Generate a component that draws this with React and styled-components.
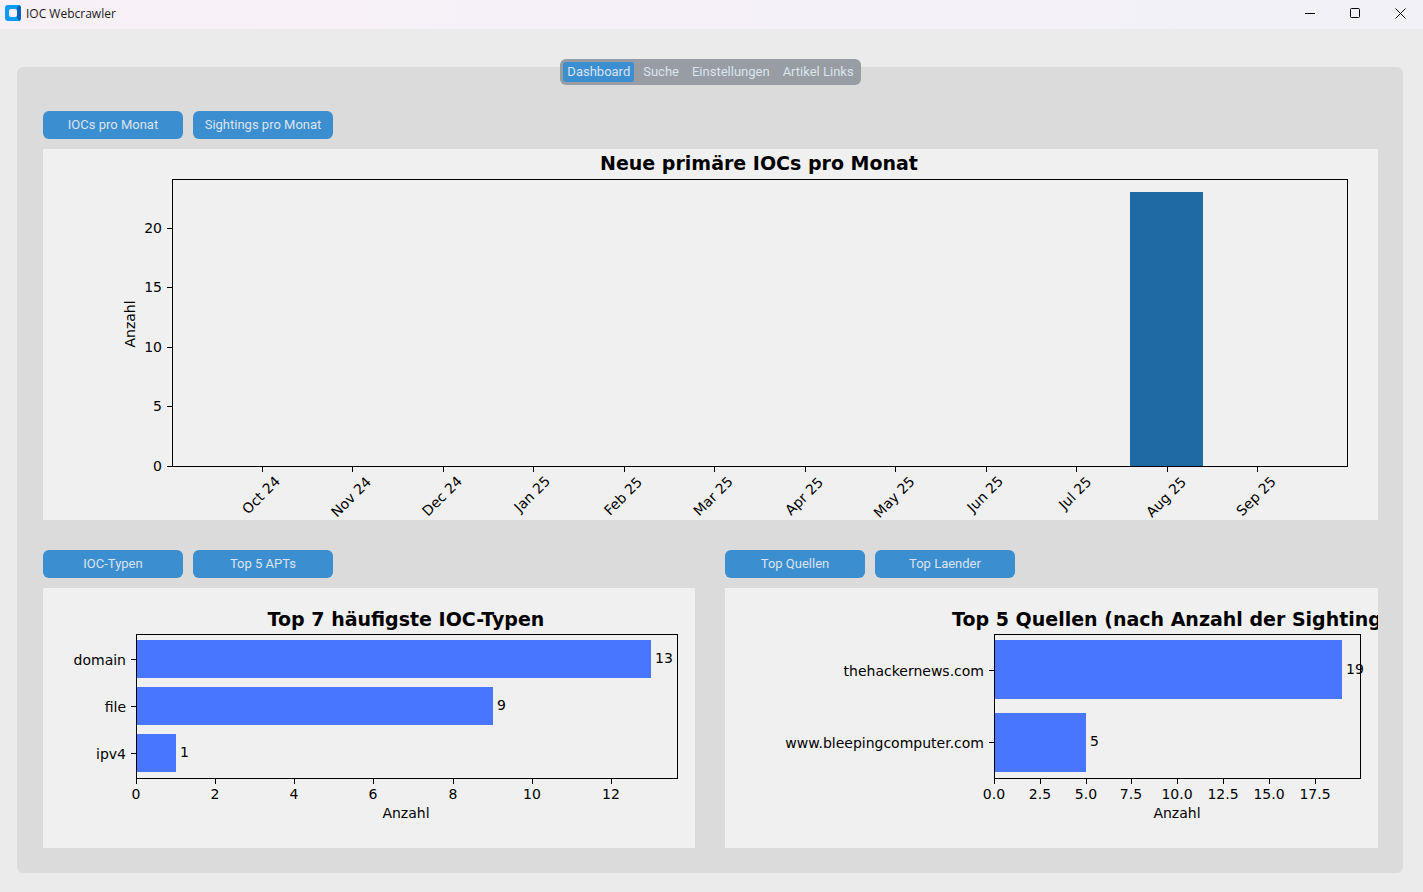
import React, { useState } from "react";
import styled, { createGlobalStyle } from "styled-components";

const GlobalStyle = createGlobalStyle`
  *, *::before, *::after { box-sizing: border-box; }
  body {
    margin: 0;
    background: #ebebeb;
    font-family: Roboto, "Liberation Sans", sans-serif;
    font-size: 13px;
  }
  button { font: inherit; border: 0; margin: 0; cursor: pointer; }
`;

const TitleBar = styled.header`
  display: flex;
  align-items: center;
  height: 29px;
  padding-left: 5px;
  background: linear-gradient(90deg, #f8f0f7, #f2f1f8);
`;

const AppIcon = styled.svg`
  width: 16px;
  height: 16px;
  margin: 0 5px 3px 0;
`;

const WindowTitle = styled.h1`
  flex: 1;
  margin: 0;
  padding-bottom: 2px;
  color: #1a1a1a;
  font: 400 12px/16px "Open Sans", "Noto Sans", sans-serif;
`;

const WindowButton = styled.button`
  display: flex;
  align-items: center;
  justify-content: center;
  width: 45px;
  height: 29px;
  padding: 0 0 3px;
  background: transparent;
`;

const Panel = styled.main`
  margin: 38px 20px 19px 17px;
  padding: 0 25px 25px 26px;
  border-radius: 6px;
  background: #dbdbdb;
  display: flex;
  flex-direction: column;
  align-items: stretch;
`;

const TabBar = styled.nav`
  align-self: center;
  display: flex;
  gap: 5px;
  height: 26px;
  margin: -8px 0 26px;
  padding: 3px;
  border-radius: 6px;
  background: #979da2;
`;

const Tab = styled.button`
  padding: 0 4px;
  border-radius: 3px;
  line-height: 20px;
  white-space: nowrap;
  color: #dce4ee;
  background: ${(p) => (p.$active ? "#3b8ed0" : "transparent")};
`;

const Section = styled.section`
  display: flex;
  flex-direction: column;
  gap: 10px;
  min-width: 0;
`;

const LowerRow = styled.div`
  display: grid;
  grid-template-columns: 652fr 653fr;
  gap: 30px;
  margin-top: 30px;
`;

const ButtonRow = styled.div`
  display: flex;
  gap: 10px;
`;

const ActionButton = styled.button`
  width: 140px;
  height: 28px;
  padding: 0 0 2px;
  border-radius: 6px;
  color: #dce4ee;
  background: #3b8ed0;
`;

const Chart = styled.svg`
  display: block;
  width: 100%;
  height: auto;
  background: #f0f0f0;
  font-family: "DejaVu Sans", sans-serif;
  font-size: 14px;
`;

const Title = styled.text`
  font-size: 19px;
  font-weight: 700;
  text-anchor: middle;
`;

const Label = styled.text`
  text-anchor: ${(p) => p.$anchor || "middle"};
`;

const Line = styled.path`
  fill: none;
  stroke: #000;
  stroke-width: 1px;
  shape-rendering: crispEdges;
`;

const Bar = styled.rect`
  fill: ${(p) => p.$color || "#4876ff"};
  shape-rendering: crispEdges;
`;

/* Month labels with their text lengths, which set how far each slanted label hangs down. */
const months = [
  ["Oct 24", 46], ["Nov 24", 50], ["Dec 24", 49], ["Jan 25", 44],
  ["Feb 25", 48], ["Mar 25", 49], ["Apr 25", 47], ["May 25", 51],
  ["Jun 25", 44], ["Jul 25", 39], ["Aug 25", 50], ["Sep 25", 49],
];

const counts = [
  { value: 20, y: 79 },
  { value: 15, y: 138 },
  { value: 10, y: 198 },
  { value: 5, y: 257 },
  { value: 0, y: 317 },
];

function MonthlyChart() {
  return (
    <Chart viewBox="0 0 1335 371" role="img" aria-label="Neue primäre IOCs pro Monat">
      <Title x="716" y="21">Neue primäre IOCs pro Monat</Title>
      <Bar x="1087" y="43" width="73" height="274" $color="#1f6aa5" />
      <Line d="M129.5 30.5H1304.5V317.5H129.5Z" />
      {counts.map((c) => (
        <g key={c.value}>
          <Line d={`M124 ${c.y + 0.5}h5`} />
          <Label x="119" y={c.y + 5} $anchor="end">{c.value}</Label>
        </g>
      ))}
      {months.map(([name, length], i) => {
        const x = Math.round(219 + i * 90.45);
        const drop = 326 + Math.round((length + 11) * 0.354);
        return (
          <g key={name}>
            <Line d={`M${x + 0.5} 318v5`} />
            <Label transform={`translate(${x - 1} ${drop}) rotate(-45)`} y="5">{name}</Label>
          </g>
        );
      })}
      <Label transform="translate(92 175) rotate(-90)">Anzahl</Label>
    </Chart>
  );
}

function RankingChart({ width, title, left, right, rows, barHeight, ticks }) {
  const middle = Math.floor((left + right) / 2);
  return (
    <Chart viewBox={`0 0 ${width} 260`} role="img" aria-label={title}>
      <Title x={middle} y="38">{title}</Title>
      {rows.map((r) => (
        <Bar key={r.name} x={left} y={r.y} width={r.end - left} height={barHeight} />
      ))}
      <Line d={`M${left + 0.5} 46.5H${right + 0.5}V190.5H${left + 0.5}Z`} />
      {rows.map((r) => (
        <g key={r.name}>
          <Line d={`M${left - 5} ${r.tick + 0.5}h5`} />
          <Label x={left - 10} y={r.tick + 6} $anchor="end">{r.name}</Label>
          <Label x={r.end + 4} y={r.tick + 4} $anchor="start">{r.value}</Label>
        </g>
      ))}
      {ticks.map(([text, x]) => (
        <g key={text}>
          <Line d={`M${x + 0.5} 191v5`} />
          <Label x={x} y="211">{text}</Label>
        </g>
      ))}
      <Label x={middle} y="230">Anzahl</Label>
    </Chart>
  );
}

const typeRows = [
  { name: "domain", value: 13, y: 52, tick: 71, end: 608 },
  { name: "file", value: 9, y: 99, tick: 118, end: 450 },
  { name: "ipv4", value: 1, y: 146, tick: 165, end: 133 },
];
const typeTicks = [
  ["0", 93], ["2", 172], ["4", 251], ["6", 330], ["8", 410], ["10", 489], ["12", 568],
];

const sourceRows = [
  { name: "thehackernews.com", value: 19, y: 52, tick: 82, end: 617 },
  { name: "www.bleepingcomputer.com", value: 5, y: 125, tick: 154, end: 361 },
];
const sourceTicks = [
  ["0.0", 269], ["2.5", 315], ["5.0", 361], ["7.5", 406],
  ["10.0", 452], ["12.5", 498], ["15.0", 544], ["17.5", 590],
];

const tabs = ["Dashboard", "Suche", "Einstellungen", "Artikel Links"];

export default function App() {
  const [active, setActive] = useState("Dashboard");
  return (
    <>
      <GlobalStyle />
      <TitleBar>
        <AppIcon viewBox="0 0 16 16" aria-hidden="true">
          <rect width="16" height="16" rx="3" fill="#0a9bff" />
          <path d="M12 3L14 0Q16 1 16 3V13Q16 15 14 16L12 13Z" fill="#0862b5" />
          <rect x="4" y="4" width="8" height="8" rx="2" fill="#f8f0f7" />
        </AppIcon>
        <WindowTitle>IOC Webcrawler</WindowTitle>
        <WindowButton type="button" aria-label="Minimieren">
          <svg width="11" height="11" viewBox="0 0 11 11" stroke="#000" fill="none">
            <path d="M0 5.5H10" />
          </svg>
        </WindowButton>
        <WindowButton type="button" aria-label="Maximieren">
          <svg width="11" height="11" viewBox="0 0 11 11" stroke="#000" fill="none">
            <rect x="0.5" y="0.5" width="9" height="9" rx="1" />
          </svg>
        </WindowButton>
        <WindowButton type="button" aria-label="Schließen">
          <svg width="11" height="11" viewBox="0 0 11 11" stroke="#000" fill="none">
            <path d="M0.5 0.5L10.5 10.5M10.5 0.5L0.5 10.5" />
          </svg>
        </WindowButton>
      </TitleBar>
      <Panel>
        <TabBar>
          {tabs.map((t) => (
            <Tab key={t} type="button" $active={t === active} onClick={() => setActive(t)}>
              {t}
            </Tab>
          ))}
        </TabBar>
        <Section>
          <ButtonRow>
            <ActionButton type="button">IOCs pro Monat</ActionButton>
            <ActionButton type="button">Sightings pro Monat</ActionButton>
          </ButtonRow>
          <MonthlyChart />
        </Section>
        <LowerRow>
          <Section>
            <ButtonRow>
              <ActionButton type="button">IOC-Typen</ActionButton>
              <ActionButton type="button">Top 5 APTs</ActionButton>
            </ButtonRow>
            <RankingChart
              width={652}
              title="Top 7 häufigste IOC-Typen"
              left={93}
              right={634}
              rows={typeRows}
              barHeight={38}
              ticks={typeTicks}
            />
          </Section>
          <Section>
            <ButtonRow>
              <ActionButton type="button">Top Quellen</ActionButton>
              <ActionButton type="button">Top Laender</ActionButton>
            </ButtonRow>
            <RankingChart
              width={653}
              title="Top 5 Quellen (nach Anzahl der Sightings)"
              left={269}
              right={635}
              rows={sourceRows}
              barHeight={59}
              ticks={sourceTicks}
            />
          </Section>
        </LowerRow>
      </Panel>
    </>
  );
}
